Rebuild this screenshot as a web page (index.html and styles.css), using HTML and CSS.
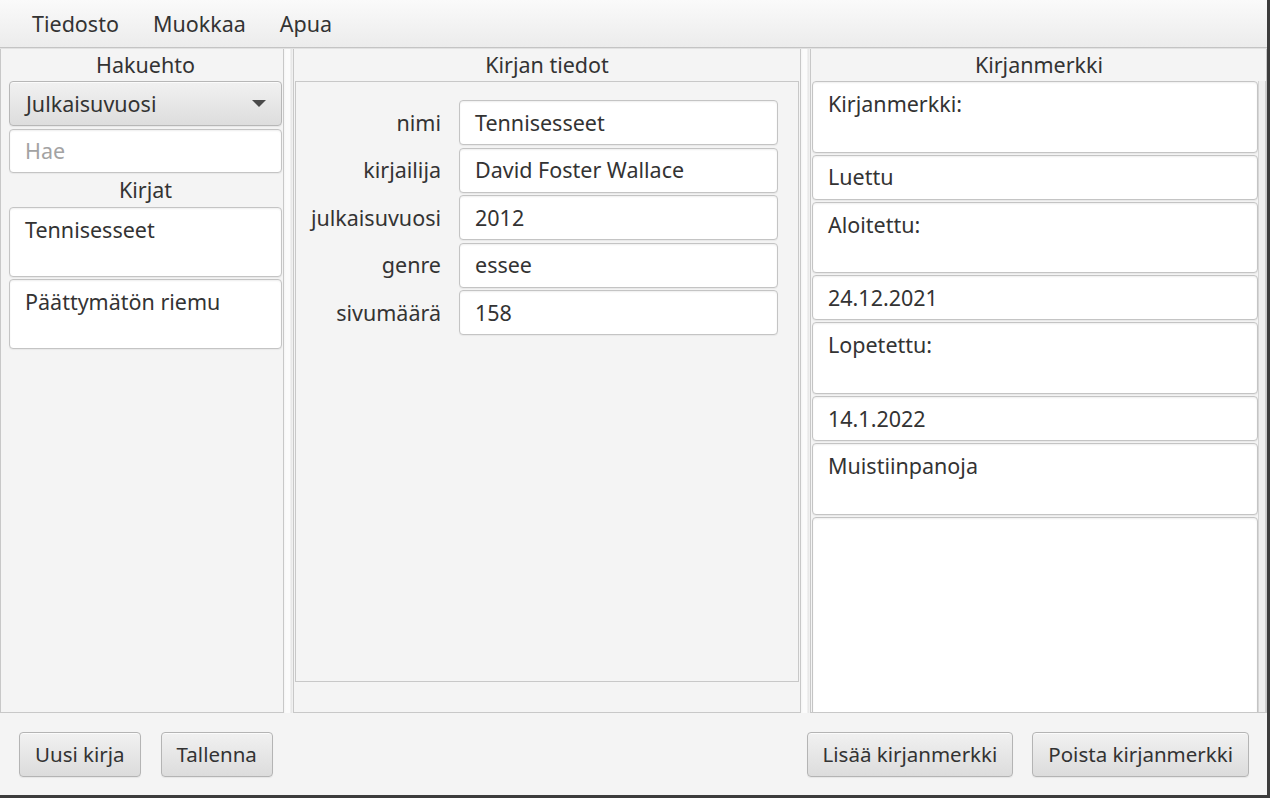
FILE: index.html
```html
<!DOCTYPE html>
<html lang="fi">
<head>
<meta charset="utf-8">
<title>Kirjasto</title>
<link rel="stylesheet" href="styles.css">
</head>
<body>
<div class="app">
  <nav class="menubar">
    <span class="menu-item">Tiedosto</span>
    <span class="menu-item">Muokkaa</span>
    <span class="menu-item">Apua</span>
  </nav>
  <main class="split">
    <section class="pane pane-left">
      <div class="pane-title">Hakuehto</div>
      <div class="combo"><span>Julkaisuvuosi</span><span class="arrow"></span></div>
      <div class="field placeholder">Hae</div>
      <div class="pane-title title-kirjat">Kirjat</div>
      <div class="book-list">
        <div class="area list-item">Tennisesseet</div>
        <div class="area list-item">Päättymätön riemu</div>
      </div>
    </section>
    <div class="divider"></div>
    <section class="pane pane-mid">
      <div class="pane-title">Kirjan tiedot</div>
      <div class="details">
        <div class="form">
          <span class="form-label">nimi</span><div class="field">Tennisesseet</div>
          <span class="form-label">kirjailija</span><div class="field">David Foster Wallace</div>
          <span class="form-label">julkaisuvuosi</span><div class="field">2012</div>
          <span class="form-label">genre</span><div class="field">essee</div>
          <span class="form-label">sivumäärä</span><div class="field">158</div>
        </div>
      </div>
      <div class="mid-footer"></div>
    </section>
    <div class="divider"></div>
    <section class="pane pane-right">
      <div class="pane-title">Kirjanmerkki</div>
      <div class="scroll">
        <div class="bm-list">
          <div class="area tall">Kirjanmerkki:</div>
          <div class="field">Luettu</div>
          <div class="area tall">Aloitettu:</div>
          <div class="field">24.12.2021</div>
          <div class="area tall">Lopetettu:</div>
          <div class="field">14.1.2022</div>
          <div class="area tall">Muistiinpanoja</div>
          <div class="area notes"></div>
        </div>
        <div class="scroll-strip"></div>
      </div>
    </section>
  </main>
  <footer class="toolbar">
    <div class="btn-group">
      <button class="btn">Uusi kirja</button>
      <button class="btn">Tallenna</button>
    </div>
    <div class="btn-group right">
      <button class="btn">Lisää kirjanmerkki</button>
      <button class="btn">Poista kirjanmerkki</button>
    </div>
  </footer>
</div>
</body>
</html>
```

FILE: styles.css
```css
* { box-sizing: border-box; }

html, body {
  margin: 0;
  padding: 0;
  background: #3a3a3a;
}

body {
  font-family: "Noto Sans", "Open Sans", sans-serif;
  font-size: 21.5px;
  color: #333333;
}

.app {
  width: 1270px;
  height: 798px;
  display: flex;
  flex-direction: column;
  background: #f4f4f4;
  border-right: 3px solid #3c3c3c;
  border-bottom: 3px solid #3c3c3c;
  overflow: hidden;
}

/* Menu bar */
.menubar {
  height: 48px;
  flex: none;
  display: flex;
  align-items: center;
  gap: 34px;
  padding-left: 32px;
  background: linear-gradient(#fafafa, #ececec);
  border-bottom: 1px solid #c4c4c4;
}

.menu-item { line-height: 28px; }

/* Split area */
.split {
  height: 665px;
  flex: none;
  display: flex;
  border-top: 1px solid #e2e2e2;
}

.pane {
  display: flex;
  flex-direction: column;
  border: 1px solid #c8c8c8;
  border-top: none;
  background: #f4f4f4;
  overflow: hidden;
}

.pane-title {
  height: 32px;
  flex: none;
  display: flex;
  align-items: center;
  justify-content: center;
  line-height: 28px;
}

.divider {
  width: 9px;
  flex: none;
  background: linear-gradient(to right, #f4f4f4 0, #fbfbfb 2px, #fbfbfb 6px, #e4e4e4 7px, #f4f4f4 9px);
}

/* Left pane */
.pane-left {
  width: 284px;
  flex: none;
  padding: 0 1px 0 8px;
}

.combo {
  height: 45px;
  flex: none;
  display: flex;
  align-items: center;
  justify-content: space-between;
  padding: 0 15px 0 16px;
  border: 1px solid #b7b7b7;
  border-radius: 4px;
  background: linear-gradient(#f1f1f1, #dddddd);
  box-shadow: inset 0 1px 0 rgba(255,255,255,0.7), 0 1px 1px rgba(0,0,0,0.06);
  line-height: 28px;
}

.arrow {
  width: 0;
  height: 0;
  border-left: 7px solid transparent;
  border-right: 7px solid transparent;
  border-top: 7px solid #4a4a4a;
}

.pane-left .field {
  margin-top: 3px;
  height: 44px;
}

.title-kirjat { height: 33px; }

.placeholder { color: #a3a3a3; }

.book-list {
  display: flex;
  flex-direction: column;
  gap: 2px;
  margin-top: 1px;
}

.list-item { height: 70px; }

/* Shared inputs */
.field {
  height: 45px;
  flex: none;
  display: flex;
  align-items: center;
  padding: 0 15px;
  background: #ffffff;
  border: 1px solid #c4c4c4;
  border-radius: 4px;
  box-shadow: inset 0 1px 2px rgba(0,0,0,0.07), 0 1px 1px rgba(0,0,0,0.05);
  line-height: 28px;
  white-space: nowrap;
}

.area {
  flex: none;
  padding: 7px 15px 0;
  background: #ffffff;
  border: 1px solid #c4c4c4;
  border-radius: 4px;
  box-shadow: inset 0 1px 2px rgba(0,0,0,0.07), 0 1px 1px rgba(0,0,0,0.05);
  line-height: 30px;
  white-space: nowrap;
}

/* Middle pane */
.pane-mid {
  width: 508px;
  flex: none;
  padding: 0 1px;
}

.details {
  flex: 1;
  border: 1px solid #c8c8c8;
  padding-top: 18px;
}

.form {
  display: grid;
  grid-template-columns: 145px 319px;
  column-gap: 18px;
  row-gap: 2.5px;
  grid-auto-rows: 45px;
}

.form-label {
  display: flex;
  align-items: center;
  justify-content: flex-end;
  line-height: 28px;
}

.mid-footer {
  height: 30px;
  flex: none;
}

/* Right pane */
.pane-right {
  flex: 1;
  padding-left: 1px;
}

.scroll {
  flex: 1;
  display: flex;
  overflow: hidden;
}

.bm-list {
  width: 446px;
  flex: none;
  display: flex;
  flex-direction: column;
  gap: 2px;
}

.tall { height: 71.7px; }

.notes { height: 230px; }

.scroll-strip {
  flex: 1;
  border-left: 1px solid #d6d6d6;
  border-right: 1px solid #d0d0d0;
  background: #efefef;
}

/* Bottom toolbar */
.toolbar {
  flex: 1;
  display: flex;
  align-items: center;
  justify-content: space-between;
  padding: 0 18px 0 19px;
}

.btn-group {
  display: flex;
  gap: 20px;
}

.btn-group.right { gap: 19px; }

.btn {
  height: 45px;
  padding: 0 15px;
  font-family: inherit;
  font-size: 20.5px;
  color: #333333;
  line-height: 28px;
  border: 1px solid #b4b4b4;
  border-radius: 4px;
  background: linear-gradient(#f1f1f1, #dcdcdc);
  box-shadow: inset 0 1px 0 rgba(255,255,255,0.7), 0 1px 1px rgba(0,0,0,0.06);
}
```
